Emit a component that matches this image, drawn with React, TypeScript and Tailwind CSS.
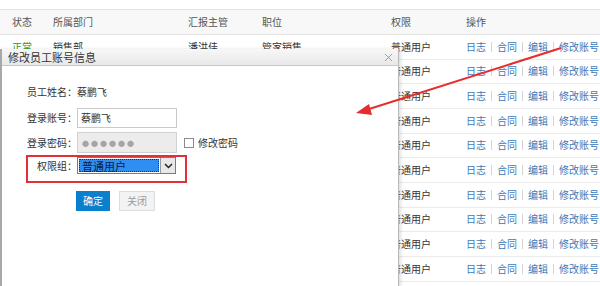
import { X } from 'lucide-react'

const columns = ['状态', '所属部门', '汇报主管', '职位', '权限', '操作']
const colTemplate = 'grid-cols-[41px_135px_74px_129px_75px_1fr]'

function ActionLinks() {
  const links = ['日志', '合同', '编辑', '修改账号']
  return (
    <div className="flex items-center text-[#3b78b8]">
      {links.map((l, i) => (
        <div key={l} className="flex items-center">
          {i > 0 && <span className="mx-[5px] h-[10px] border-l border-[#d4d4d4]" />}
          <span>{l}</span>
        </div>
      ))}
    </div>
  )
}

function EmployeeTable() {
  const rows = Array.from({ length: 10 })
  return (
    <div className="w-[600px] text-[10px] leading-[12px] text-[#333]">
      <div className="h-[10px] border-b border-[#e3e3e3] bg-white" />
      <div className={`grid ${colTemplate} h-[25px] items-center border-b border-[#e3e3e3] bg-[#f8f8f8] pl-[12px] text-[#555]`}>
        {columns.map((c) => (
          <span key={c}>{c}</span>
        ))}
      </div>
      {rows.map((_, i) => (
        <div
          key={i}
          className={`grid ${colTemplate} h-[24.67px] items-center border-b border-[#ebebeb] pl-[12px]`}
        >
          <span className="text-[#2d9a2d]">正常</span>
          <span>销售部</span>
          <span>潘洪佳</span>
          <span>管家销售</span>
          <span>普通用户</span>
          <ActionLinks />
        </div>
      ))}
    </div>
  )
}

function FieldLabel({ children }: { children: string }) {
  return <span className="w-[50px] shrink-0 whitespace-nowrap text-right">{children}</span>
}

function EditAccountDialog() {
  return (
    <div className="absolute left-0 top-[49px] h-[260px] w-[399px] border-l-2 border-r border-l-[#a8a8a8] border-r-[#b8b8b8] bg-white shadow-[2px_0_3px_rgba(0,0,0,0.12)]">
      <div className="flex h-[17px] items-center justify-between border-b border-[#c8c8c8] bg-gradient-to-b from-[#f7f7f7] to-[#e9e9e9] pl-[6px] pr-[3px]">
        <span className="text-[11px] leading-[13px] text-[#333]">修改员工账号信息</span>
        <X size={13} strokeWidth={1.5} className="text-[#8a8a8a]" />
      </div>

      <div className="flex flex-col pl-[25px] text-[10px] leading-[12px] text-[#333]">
        <div className="mt-[20px] flex items-center">
          <FieldLabel>员工姓名：</FieldLabel>
          <span>蔡鹏飞</span>
        </div>

        <div className="mt-[10px] flex items-center">
          <FieldLabel>登录账号：</FieldLabel>
          <div className="flex h-[20px] w-[100px] items-center border border-[#c9c9c9] bg-white px-[3px]">
            蔡鹏飞
          </div>
        </div>

        <div className="mt-[4px] flex items-center">
          <FieldLabel>登录密码：</FieldLabel>
          <div className="flex h-[21px] w-[100px] items-center border border-[#d2d2d2] bg-[#ececec] px-[4px] text-[7px] tracking-[2px] text-[#a5a5a5]">
            ●●●●●●
          </div>
          <span className="ml-[7px] h-[10px] w-[10px] border border-[#8c8c8c] bg-white" />
          <span className="ml-[4px]">修改密码</span>
        </div>

        <div className="mt-[4px] flex items-center">
          <FieldLabel>权限组：</FieldLabel>
          <div className="flex h-[17px] w-[99px] items-stretch border border-[#7a7a7a] bg-white">
            <div className="m-[1px] flex flex-1 items-center border border-dotted border-[#1a2f66] bg-[#2f8ef2] px-[2px] text-[11px] leading-[12px] text-[#0d1d45]">
              普通用户
            </div>
            <div className="flex w-[15px] items-center justify-center border-l border-[#9a9a9a] bg-[#e8e8e8]">
              <svg width="9" height="6" viewBox="0 0 9 6">
                <path d="M1 1l3.5 3.5L8 1" fill="none" stroke="#222" strokeWidth="1.5" />
              </svg>
            </div>
          </div>
        </div>

        <div className="ml-[49px] mt-[17px] flex items-center gap-[9px]">
          <button className="h-[20px] w-[34px] bg-[#0a7fcc] text-[10px] text-white">确定</button>
          <button className="h-[20px] w-[36px] border border-[#dcdcdc] bg-[#f3f3f3] text-[10px] text-[#9a9a9a]">
            关闭
          </button>
        </div>
      </div>

      <div className="absolute left-[24px] top-[106px] h-[28px] w-[161px] border-2 border-[#e0313b]" />
    </div>
  )
}

function PointerArrow() {
  return (
    <svg className="absolute left-0 top-0" width="600" height="286" viewBox="0 0 600 286">
      <line x1="561" y1="48" x2="366" y2="110" stroke="#e52d2d" strokeWidth="2" />
      <polygon points="356,113 369,104 372,115" fill="#e52d2d" />
    </svg>
  )
}

export default function App() {
  return (
    <div
      className="relative h-[286px] w-[600px] overflow-hidden bg-white"
      style={{ fontFamily: '"Noto Sans CJK SC", "Noto Sans", sans-serif' }}
    >
      <EmployeeTable />
      <EditAccountDialog />
      <PointerArrow />
    </div>
  )
}
